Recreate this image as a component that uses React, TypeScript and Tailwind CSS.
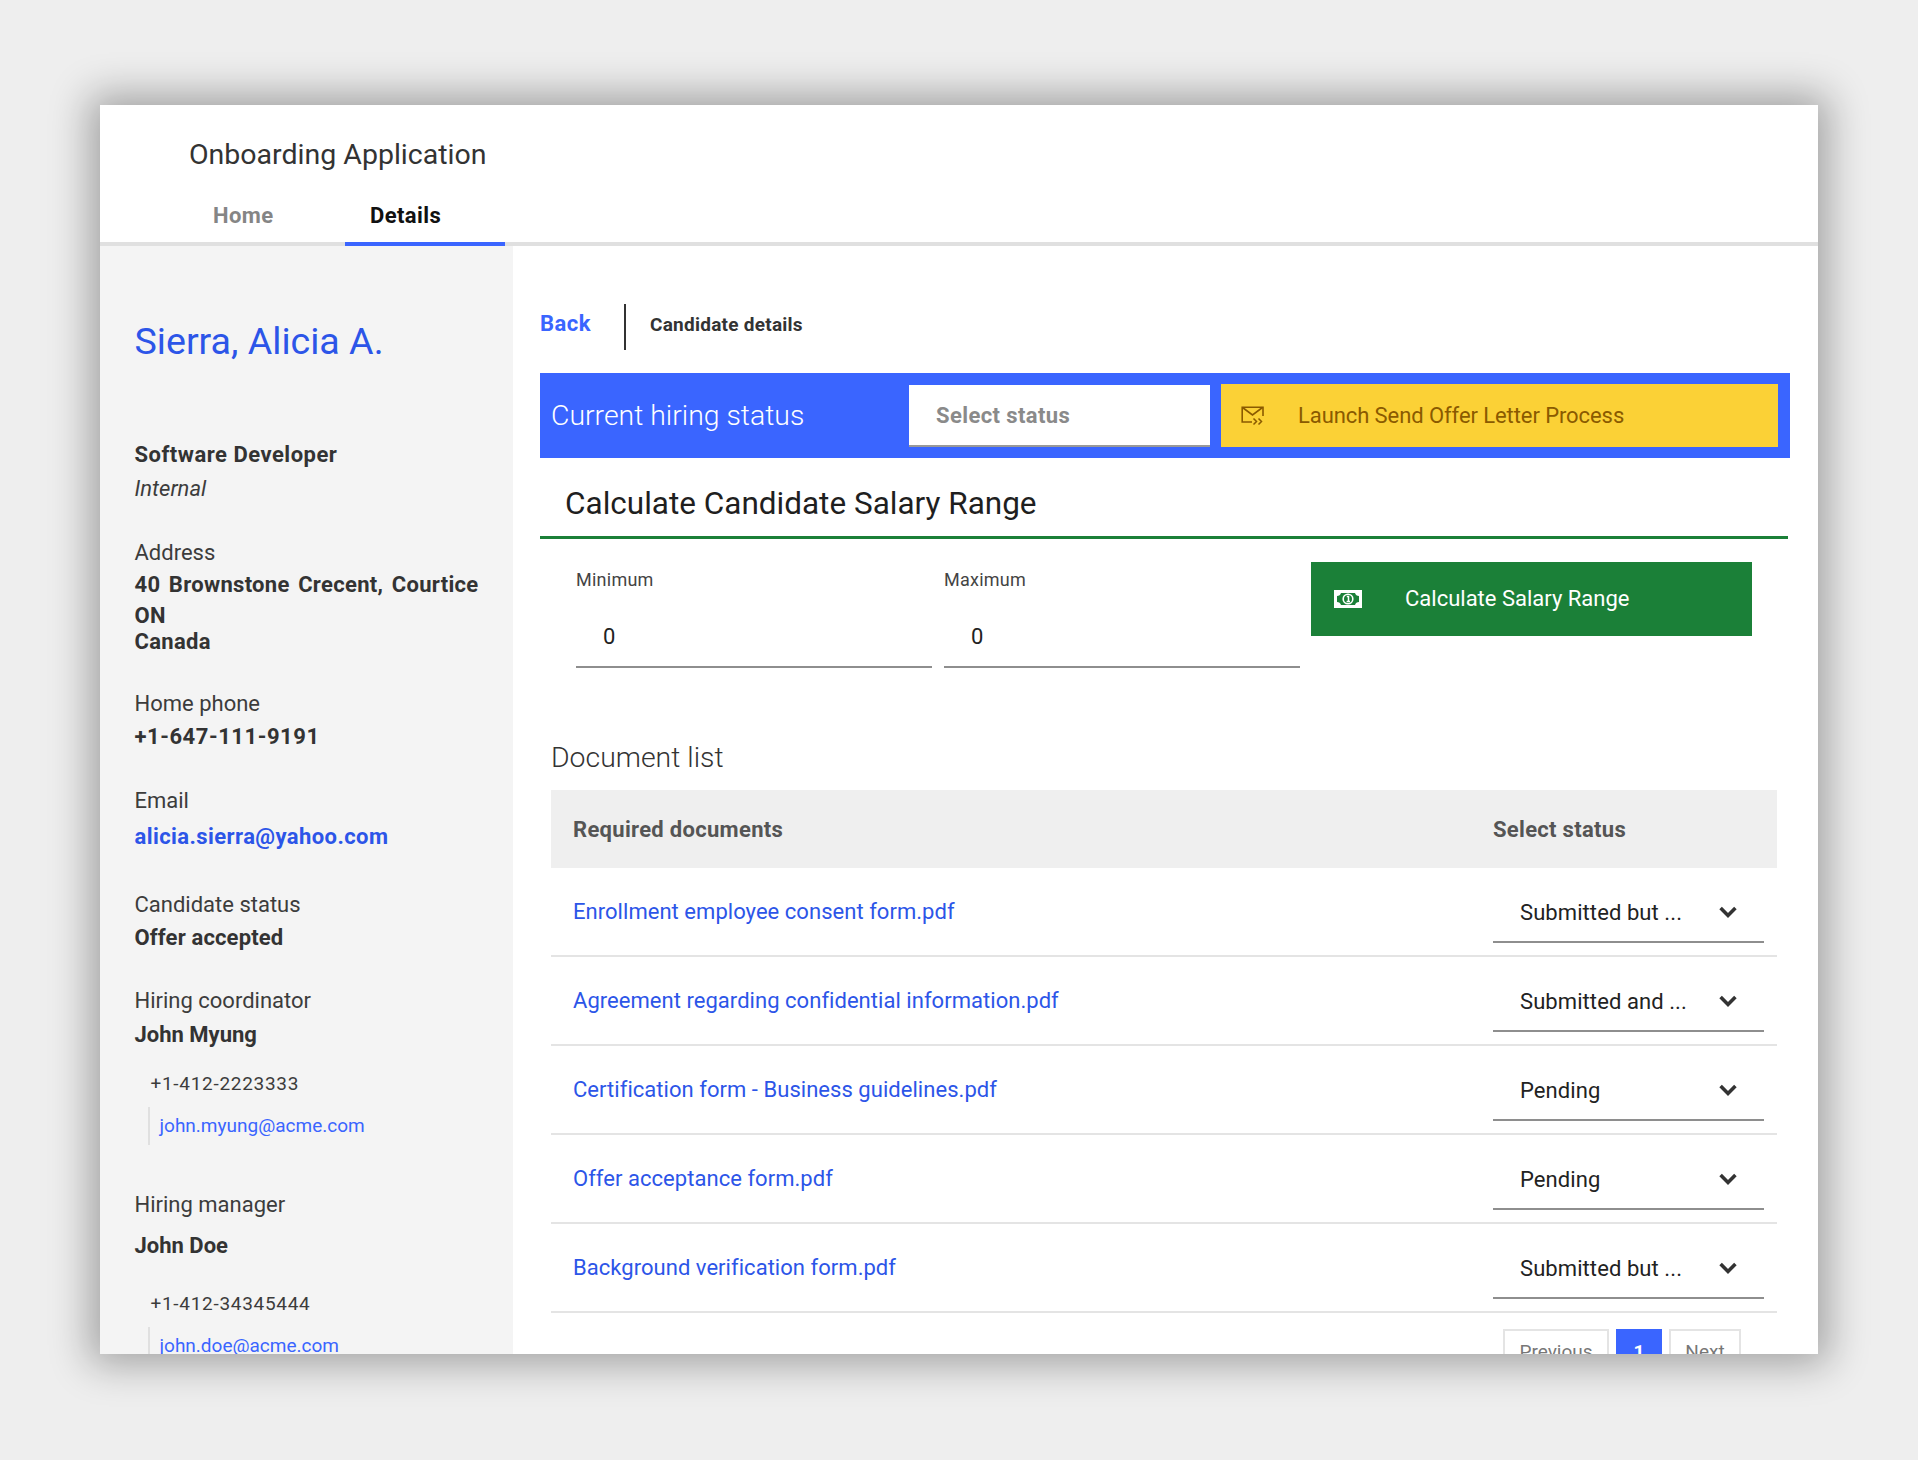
import React from "react";

const font = { fontFamily: '"Roboto", "Liberation Sans", sans-serif' };

const rows = [
  ["Enrollment employee consent form.pdf", "Submitted but ..."],
  ["Agreement regarding confidential information.pdf", "Submitted and ..."],
  ["Certification form - Business guidelines.pdf", "Pending"],
  ["Offer acceptance form.pdf", "Pending"],
  ["Background verification form.pdf", "Submitted but ..."],
];

function Chevron() {
  return (
    <svg width="18" height="12" viewBox="0 0 18 12" fill="none" className="block">
      <path d="M1.6 2 L9 9.4 L16.4 2" stroke="#333333" strokeWidth="3.6" />
    </svg>
  );
}

function MailIcon() {
  return (
    <svg width="24" height="20" viewBox="0 0 24 20" fill="none" className="block">
      <path d="M11 16H1.2V1.2H22V10" stroke="#8a5a00" strokeWidth="1.6" />
      <path d="M1.5 1.5L11.5 9L21.5 1.5" stroke="#8a5a00" strokeWidth="1.6" />
      <path d="M12.5 12.5L15.5 15.5L12.5 18.5M17.5 12.5L20.5 15.5L17.5 18.5" stroke="#8a5a00" strokeWidth="1.5" />
    </svg>
  );
}

function MoneyIcon() {
  return (
    <svg width="28" height="18" viewBox="0 0 28 18" className="block">
      <path
        fill="#ffffff"
        fillRule="evenodd"
        d="M0 0H28V18H0ZM3 6V12C5 12 6.5 13 7 15H21C21.5 13 23 12 25 12V6C23 6 21.5 5 21 3H7C6.5 5 5 6 3 6Z"
      />
      <circle cx="14" cy="9" r="5.6" fill="#ffffff" />
      <circle cx="14" cy="9" r="4" fill="#1b8038" />
      <path d="M12.8 6.6H14.5V11.4M12.6 11.4H16" fill="none" stroke="#ffffff" strokeWidth="1.5" />
    </svg>
  );
}

function Field({ label, value }: { label: string; value: string }) {
  return (
    <div className="w-[356px]">
      <div className="mt-[7px] text-[18px] leading-[22px] tracking-[0.25px] text-[#444444]">{label}</div>
      <div className="mt-[19px] h-[58px] border-b-2 border-[#8e8e8e] pl-[27px] pt-[11px] text-[22px] leading-[32px] text-[#222222]">
        {value}
      </div>
    </div>
  );
}

export default function App() {
  return (
    <div className="h-[1460px] w-[1918px] overflow-hidden bg-[#eeeeee] pl-[100px] pt-[105px]" style={font}>
      <div className="flex h-[1249px] w-[1718px] flex-col overflow-hidden bg-white shadow-[0_0_38px_10px_rgba(0,0,0,0.32)]">
        <header className="h-[141px] shrink-0 border-b-4 border-[#e0e0e0]">
          <div className="pl-[89px] pt-[31px] text-[28.5px] font-normal leading-[38px] text-[#333333]">
            Onboarding Application
          </div>
          <nav className="mt-[17px] flex h-[50px] pl-[113px] text-[22px] font-bold leading-[50px] tracking-[0.4px]">
            <a className="w-[132px] text-[#858585]">Home</a>
            <a className="h-[55px] w-[160px] border-b-4 border-[#3a65ff] pl-[25px] text-[#111111]">Details</a>
          </nav>
        </header>

        <div className="flex min-h-0 flex-1">
          <aside className="w-[413px] shrink-0 bg-[#f4f4f4] pl-[34.5px] text-[22px] text-[#3c3c3c]">
            <h1 className="mt-[71px] text-[37.6px] font-normal leading-[48px] text-[#2c55e8]">Sierra, Alicia A.</h1>

            <div className="mt-[73px] font-bold leading-[34px] tracking-[0.5px] text-[#333333]">Software Developer</div>
            <div className="italic leading-[34px]">Internal</div>

            <div className="mt-[30px] leading-[33px]">Address</div>
            <div className="w-[344px] text-justify font-bold leading-[31px] tracking-[0.3px] text-[#333333]">
              40 Brownstone Crecent, Courtice ON
            </div>
            <div className="font-bold leading-[21px] tracking-[0.3px] text-[#333333]">Canada</div>

            <div className="mt-[35px] leading-[34px]">Home phone</div>
            <div className="font-bold leading-[32px] tracking-[0.55px] text-[#333333]">+1-647-111-9191</div>

            <div className="mt-[31px] leading-[34px]">Email</div>
            <a className="block font-bold leading-[38px] tracking-[0.42px] text-[#2c55e8]">alicia.sierra@yahoo.com</a>

            <div className="mt-[32px] leading-[34px]">Candidate status</div>
            <div className="font-bold leading-[32px] tracking-[0.15px] text-[#333333]">Offer accepted</div>

            <div className="mt-[30px] leading-[34px]">Hiring coordinator</div>
            <div className="font-bold leading-[34px] text-[#333333]">John Myung</div>
            <div className="ml-[16px] mt-[18px] text-[19px] leading-[28px] tracking-[0.7px] text-[#3c3c3c]">+1-412-2223333</div>
            <div className="ml-[13px] mt-[9px] border-l-2 border-[#e0e0e0] pl-[10px] text-[19px] leading-[38px] text-[#3a65ff]">
              john.myung@acme.com
            </div>

            <div className="mt-[43px] leading-[34px]">Hiring manager</div>
            <div className="mt-[7px] font-bold leading-[34px] text-[#333333]">John Doe</div>
            <div className="ml-[16px] mt-[27px] text-[19px] leading-[28px] tracking-[0.7px] text-[#3c3c3c]">+1-412-34345444</div>
            <div className="ml-[13px] mt-[9px] border-l-2 border-[#e0e0e0] pl-[10px] text-[19px] leading-[38px] text-[#3a65ff]">
              john.doe@acme.com
            </div>
          </aside>

          <main className="min-w-0 flex-1 pl-[27px] pr-[28px] pt-[58px]">
            <div className="flex h-[46px] items-center">
              <a className="w-[84px] pb-[7px] text-[22px] font-bold tracking-[0.5px] text-[#3a65ff]">Back</a>
              <div className="h-[46px] w-[2px] bg-[#333333]" />
              <div className="pb-[3px] pl-[24px] text-[19px] font-bold tracking-[0.25px] text-[#333333]">Candidate details</div>
            </div>

            <div className="mt-[23px] flex h-[85px] items-center bg-[#3a65ff] pl-[11px] pr-[12px]">
              <div className="w-[358px] pt-[2px] text-[28.4px] font-light text-white">Current hiring status</div>
              <div className="flex h-[62px] w-[301px] items-center border-b-2 border-[#999999] bg-white pl-[27px] pt-[2px] text-[22px] font-bold tracking-[0.4px] text-[#8a8a8a]">
                Select status
              </div>
              <button className="ml-[11px] flex h-[63px] flex-1 items-center bg-[#fbd136] pl-[20px] text-[22px] text-[#8a5a00]">
                <MailIcon />
                <span className="ml-[33px] tracking-[-0.08px]">Launch Send Offer Letter Process</span>
              </button>
            </div>

            <div className="mr-[2px] h-[81px] border-b-[3px] border-[#1b8038] pl-[25px] text-[31.5px] leading-[92px] text-[#1f1f1f]">
              Calculate Candidate Salary Range
            </div>

            <div className="flex gap-[12px] pl-[36px] pt-[23px]">
              <Field label="Minimum" value="0" />
              <Field label="Maximum" value="0" />
              <button className="-ml-px flex h-[74px] w-[441px] items-center bg-[#1b8038] pl-[23px] text-[22px] text-white">
                <MoneyIcon />
                <span className="ml-[43px] pb-[2px]">Calculate Salary Range</span>
              </button>
            </div>

            <div className="ml-[11px] mt-[70px] text-[28.4px] font-light leading-[40px] text-[#333333]">Document list</div>

            <div className="ml-[11px] mr-[13px] mt-[12px]">
              <div className="flex h-[78px] items-center bg-[#efefef] text-[22px] font-bold tracking-[0.3px] text-[#555555]">
                <div className="w-[942px] pl-[22px]">Required documents</div>
                <div>Select status</div>
              </div>
              {rows.map(([name, status]) => (
                <div key={name} className="flex h-[89px] items-center border-b-2 border-[#e4e4e4] text-[22px]">
                  <a className="w-[942px] pl-[22px] tracking-[0.04px] text-[#2c55e8]">{name}</a>
                  <div className="flex h-[62px] w-[271px] items-center justify-between border-b-2 border-[#8e8e8e] pl-[27px] pr-[27px] pt-[3px] tracking-[0.08px] text-[#222222]">
                    <span>{status}</span>
                    <Chevron />
                  </div>
                </div>
              ))}
              <div className="flex justify-end gap-[7px] pr-[36px] pt-[16px] text-[19px] text-[#777777]">
                <div className="flex h-[46px] w-[106px] items-center justify-center border-2 border-[#e4e4e4]">Previous</div>
                <div className="flex h-[46px] w-[46px] items-center justify-center bg-[#3a65ff] font-bold text-white">1</div>
                <div className="flex h-[46px] w-[72px] items-center justify-center border-2 border-[#e4e4e4]">Next</div>
              </div>
            </div>
          </main>
        </div>
      </div>
    </div>
  );
}
